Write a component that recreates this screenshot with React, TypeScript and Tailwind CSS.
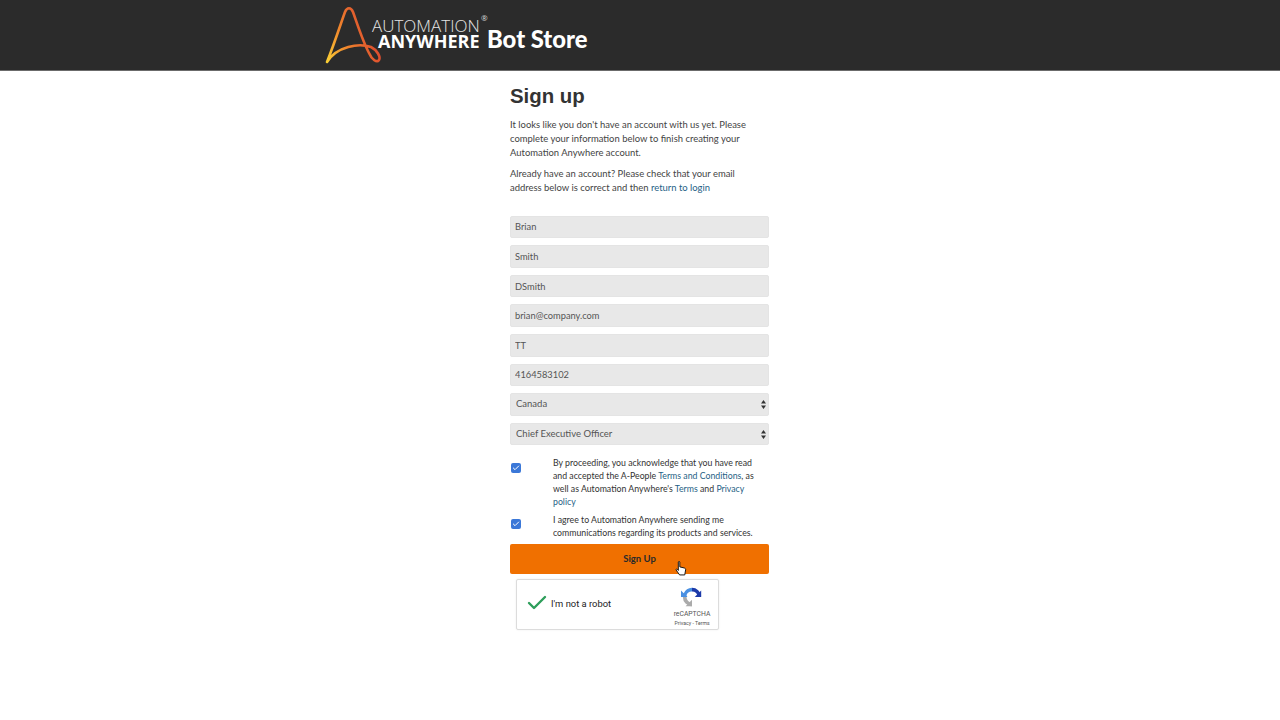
import { Check } from "lucide-react";

const fields = ["Brian", "Smith", "DSmith", "brian@company.com", "TT", "4164583102"];
const selects = ["Canada", "Chief Executive Officer"];

function Logo() {
  return (
    <div className="flex items-start h-[71px] ml-[325px]">
      <svg width="58" height="66" viewBox="0 0 58 66" className="shrink-0">
        <defs>
          <linearGradient id="aa" x1="0" y1="1" x2="1" y2="0.6">
            <stop offset="0" stopColor="#f9cf35" />
            <stop offset="0.4" stopColor="#f0872c" />
            <stop offset="1" stopColor="#d9432f" />
          </linearGradient>
        </defs>
        <path
          d="M2 62 C10 42 17 20 20 12 C22 7 26 7 28 12 C33 26 38 42 44 53 C47 60 52 63 54 60 C56 57 52 50 46 47 C34 43 12 46 2 62 Z"
          fill="none"
          stroke="url(#aa)"
          strokeWidth="2.6"
          strokeLinejoin="round"
        />
      </svg>
      <div className="relative w-[215px] h-[71px] text-white font-['Open_Sans',sans-serif]">
        <span className="absolute left-[-11px] top-[16px] text-[17px] font-light leading-[20px] text-[#e4e4e4]">
          AUTOMATION
        </span>
        <span className="absolute left-[98px] top-[14px] text-[8px] leading-[8px] text-[#ddd]">®</span>
        <span className="absolute left-[-5px] top-[31px] text-[18px] font-bold leading-[20px]">
          ANYWHERE
        </span>
        <span className="absolute left-[104px] top-[24px] text-[23.8px] font-black leading-[30px] font-['Lato',sans-serif]">
          Bot Store
        </span>
      </div>
    </div>
  );
}

function Recaptcha() {
  return (
    <div className="ml-[6px] mt-[5px] w-[203px] h-[51px] bg-white border border-[#dcdcdc] rounded-[2px] shadow-[0_0_2px_rgba(0,0,0,0.08)] flex items-center relative">
      <Check size={24} strokeWidth={2.4} className="ml-[8px] text-[#2e9e5b] shrink-0 mb-[2px]" />
      <span className="ml-[2px] mb-[1px] text-[9.4px] text-[#222] font-['Roboto',sans-serif]">I'm not a robot</span>
      <div className="absolute right-[3px] top-[6px] w-[46px] flex flex-col items-center">
        <svg width="22" height="22" viewBox="0 0 24 24">
          <path d="M12 2 A10 10 0 0 1 22 11 L18 11 A6 6 0 0 0 12 6 Z" fill="#1c3aa9" />
          <path d="M22 12 L15 12 L22 5 Z" fill="#1c3aa9" />
          <path d="M12 2 A10 10 0 0 0 3 8 L0 5 L0 12 L7 12 L6 10 A6 6 0 0 1 12 6 Z" fill="#4a90e2" />
          <path d="M2 12 A10 10 0 0 0 12 22 L12 18 A6 6 0 0 1 6 12 Z" fill="#ababab" />
          <path d="M12 22 L12 15 L5 22 Z" fill="#ababab" />
        </svg>
        <span className="text-[6.8px] leading-[9px] mt-[2px] text-[#555] font-['Roboto',sans-serif]">reCAPTCHA</span>
        <span className="text-[5.2px] leading-[8px] text-[#555] font-['Roboto',sans-serif]">Privacy - Terms</span>
      </div>
    </div>
  );
}

export default function App() {
  return (
    <div className="min-h-[720px] bg-white relative font-['Lato',sans-serif] text-[#444]">
      <header className="bg-[#2b2b2b] border-b border-[#6b6b6b] h-[71px] overflow-hidden">
        <Logo />
      </header>

      <main className="w-[260px] pr-px mx-auto">
        <h1 className="mt-[12px] text-[20.4px] leading-[26px] font-bold text-[#333] font-['Liberation_Sans',sans-serif]">
          Sign up
        </h1>
        <p className="mt-[9px] w-[245px] text-[9.45px] leading-[14px]">
          It looks like you don't have an account with us yet. Please complete your information below to finish creating
          your Automation Anywhere account.
        </p>
        <p className="mt-[7px] w-[245px] text-[9.45px] leading-[14px]">
          Already have an account? Please check that your email address below is correct and then{" "}
          <a className="text-[#1f5f86]">return to login</a>
        </p>

        <div className="mt-[20.6px] flex flex-col gap-[7px]">
          {fields.map((v) => (
            <input
              key={v}
              readOnly
              value={v}
              className="h-[22.6px] w-full bg-[#e8e8e8] border border-[#e4e4e4] rounded-[2px] px-[4px] text-[9.3px] text-[#555] outline-none"
            />
          ))}
          {selects.map((v) => (
            <div key={v} className="relative h-[22.6px]">
              <select className="block h-full w-full appearance-none bg-[#e8e8e8] border border-[#e4e4e4] rounded-[2px] px-[5px] text-[9.5px] text-[#555] outline-none">
                <option>{v}</option>
              </select>
              <svg width="5" height="9" viewBox="0 0 5 9" className="absolute right-[3px] top-[7px]">
                <path d="M2.5 0 L5 3.6 L0 3.6 Z M2.5 9 L5 5.4 L0 5.4 Z" fill="#333" />
              </svg>
            </div>
          ))}
        </div>

        <div className="mt-[10.4px] flex text-[8.76px] leading-[13px] text-[#333]">
          <span className="w-[10px] h-[10px] mt-[7px] ml-px mr-[32px] rounded-[2px] bg-[#3b78d8] flex items-center justify-center shrink-0">
            <Check size={8} strokeWidth={3} className="text-white" />
          </span>
          <p className="w-[204px]">
            By proceeding, you acknowledge that you have read and accepted the A-People{" "}
            <a className="text-[#1f5f86]">Terms and Conditions</a>, as well as Automation Anywhere's{" "}
            <a className="text-[#1f5f86]">Terms</a> and <a className="text-[#1f5f86]">Privacy policy</a>
          </p>
        </div>
        <div className="mt-[5px] flex text-[8.76px] leading-[13px] text-[#333]">
          <span className="w-[10px] h-[10px] mt-[6px] ml-px mr-[32px] rounded-[2px] bg-[#3b78d8] flex items-center justify-center shrink-0">
            <Check size={8} strokeWidth={3} className="text-white" />
          </span>
          <p className="w-[204px]">I agree to Automation Anywhere sending me communications regarding its products and services.</p>
        </div>

        <button
          type="button"
          className="mt-[5px] h-[30px] w-full rounded-[2px] bg-[#f07000] text-[9.5px] font-bold text-[#2a2a2a] font-['Lato',sans-serif]"
        >
          Sign Up
        </button>
        <Recaptcha />
      </main>

      {/* mouse pointer */}
      <svg width="12" height="15" viewBox="0 0 11 14" className="absolute left-[675px] top-[561px]">
        <path
          d="M3 1 C3 0.3 4.4 0.3 4.4 1 L4.4 5.5 L8.5 6.5 C9.6 6.8 10 7.4 9.8 8.4 L9 13 L4.2 13 L1 8.5 C0.6 7.8 1.4 7.2 2 7.7 L3 8.8 Z"
          fill="#fff"
          stroke="#111"
          strokeWidth="0.9"
          strokeLinejoin="round"
        />
      </svg>
    </div>
  );
}
